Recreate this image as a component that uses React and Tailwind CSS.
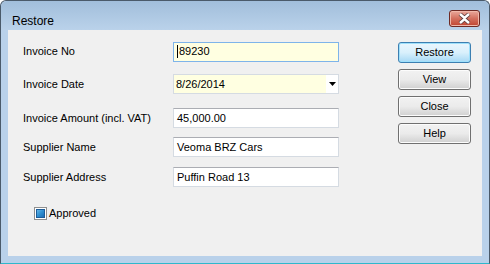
import React from "react";

const font = { fontFamily: '"Liberation Sans", Arial, sans-serif' };

const Field = ({ label, children, className = "" }) => (
  <div className={`flex items-center ${className}`}>
    <div className="w-[150px] text-[11px] text-black">{label}</div>
    {children}
  </div>
);

const TextBox = ({ value, yellow, focused }) => (
  <div
    className={`flex h-[20px] w-[166px] items-center border pl-[3px] text-[11px] text-black ${
      focused ? "border-[#7eb4ea]" : "border-[#d5dbe2] border-t-[#abadb3]"
    } ${yellow ? "bg-[#ffffe1]" : "bg-white"}`}
  >
    {focused && <span className="mr-px h-[13px] w-px bg-black" />}
    {value}
  </div>
);

const WinButton = ({ children, isDefault }) => (
  <button
    className={`h-[21px] w-[73px] rounded-[3px] border text-[11px] text-black ${
      isDefault
        ? "border-[#3c7fb1] bg-gradient-to-b from-[#eaf6fd] via-[#d9f0fc] to-[#a7d9f5] shadow-[inset_0_0_0_1px_#9ee0fb]"
        : "border-[#707070] bg-gradient-to-b from-[#f2f2f2] via-[#ebebeb] to-[#d0d0d0] shadow-[inset_0_0_0_1px_#fcfcfc]"
    }`}
  >
    {children}
  </button>
);

export default function App() {
  return (
    <div className="h-[264px] w-[490px] bg-white" style={font}>
      <div className="flex h-full w-full flex-col rounded-t-[6px] border border-[#4a5a6a] border-b-[#2fb8cc] bg-[#b9d1ea]">
        <div className="flex h-[29px] shrink-0 items-start justify-between rounded-t-[6px] bg-gradient-to-b from-[#a1bedb] to-[#bad2ea] pl-[11px] pr-[9px]">
          <div className="mt-[11px] text-[12px] text-black">Restore</div>
          <div className="mt-[9px] flex h-[17px] w-[31px] items-center justify-center rounded-[3px] border border-[#6e2a24] bg-gradient-to-b from-[#e9a99c] via-[#d3705f] to-[#c0432f] shadow-[inset_0_0_0_1px_#f0b8aa]">
            <svg width="13" height="11" viewBox="0 0 13 11">
              <path
                d="M2 1 L6.5 5 L11 1 M2 10 L6.5 6 L11 10"
                stroke="#5a3a3a"
                strokeWidth="4"
                fill="none"
              />
              <path
                d="M2 1 L6.5 5 L11 1 M2 10 L6.5 6 L11 10"
                stroke="#ffffff"
                strokeWidth="2.4"
                fill="none"
              />
            </svg>
          </div>
        </div>

        <div className="mx-[7px] mb-[7px] flex flex-1 bg-[#f0f0f0]">
          <div className="flex flex-col pl-[15px] pt-[11px]">
            <Field label="Invoice No" className="h-[21px]">
              <TextBox value="89230" yellow focused />
            </Field>
            <Field label="Invoice Date" className="mt-[12px] h-[20px]">
              <div className="flex h-[20px] w-[166px] items-center border border-[#d5dbe2] bg-white text-[11px] text-black">
                <div className="flex h-full flex-1 items-center bg-[#ffffe1] pl-[2px]">
                  8/26/2014
                </div>
                <div className="flex w-[12px] items-center justify-center">
                  <svg width="7" height="4" viewBox="0 0 7 4">
                    <path d="M0 0 H7 L3.5 4 Z" fill="#000" />
                  </svg>
                </div>
              </div>
            </Field>
            <Field label="Invoice Amount (incl. VAT)" className="mt-[14px] h-[20px]">
              <TextBox value="45,000.00" />
            </Field>
            <Field label="Supplier Name" className="mt-[9px] h-[20px]">
              <TextBox value="Veoma BRZ Cars" />
            </Field>
            <Field label="Supplier Address" className="mt-[10px] h-[20px]">
              <TextBox value="Puffin Road 13" />
            </Field>
            <div className="ml-[11px] mt-[18px] flex items-center gap-[2px] text-[11px] text-black">
              <div className="flex h-[13px] w-[13px] items-center justify-center border border-[#8e8f8f] bg-white">
                <div className="h-[9px] w-[9px] border border-[#1d5d99] bg-gradient-to-br from-[#62b6e8] via-[#2f8fd0] to-[#1c6db5]" />
              </div>
              <span>Approved</span>
            </div>
          </div>

          <div className="ml-auto mr-[11px] flex flex-col gap-[6px] pt-[12px]">
            <WinButton isDefault>Restore</WinButton>
            <WinButton>View</WinButton>
            <WinButton>Close</WinButton>
            <WinButton>Help</WinButton>
          </div>
        </div>
      </div>
    </div>
  );
}
